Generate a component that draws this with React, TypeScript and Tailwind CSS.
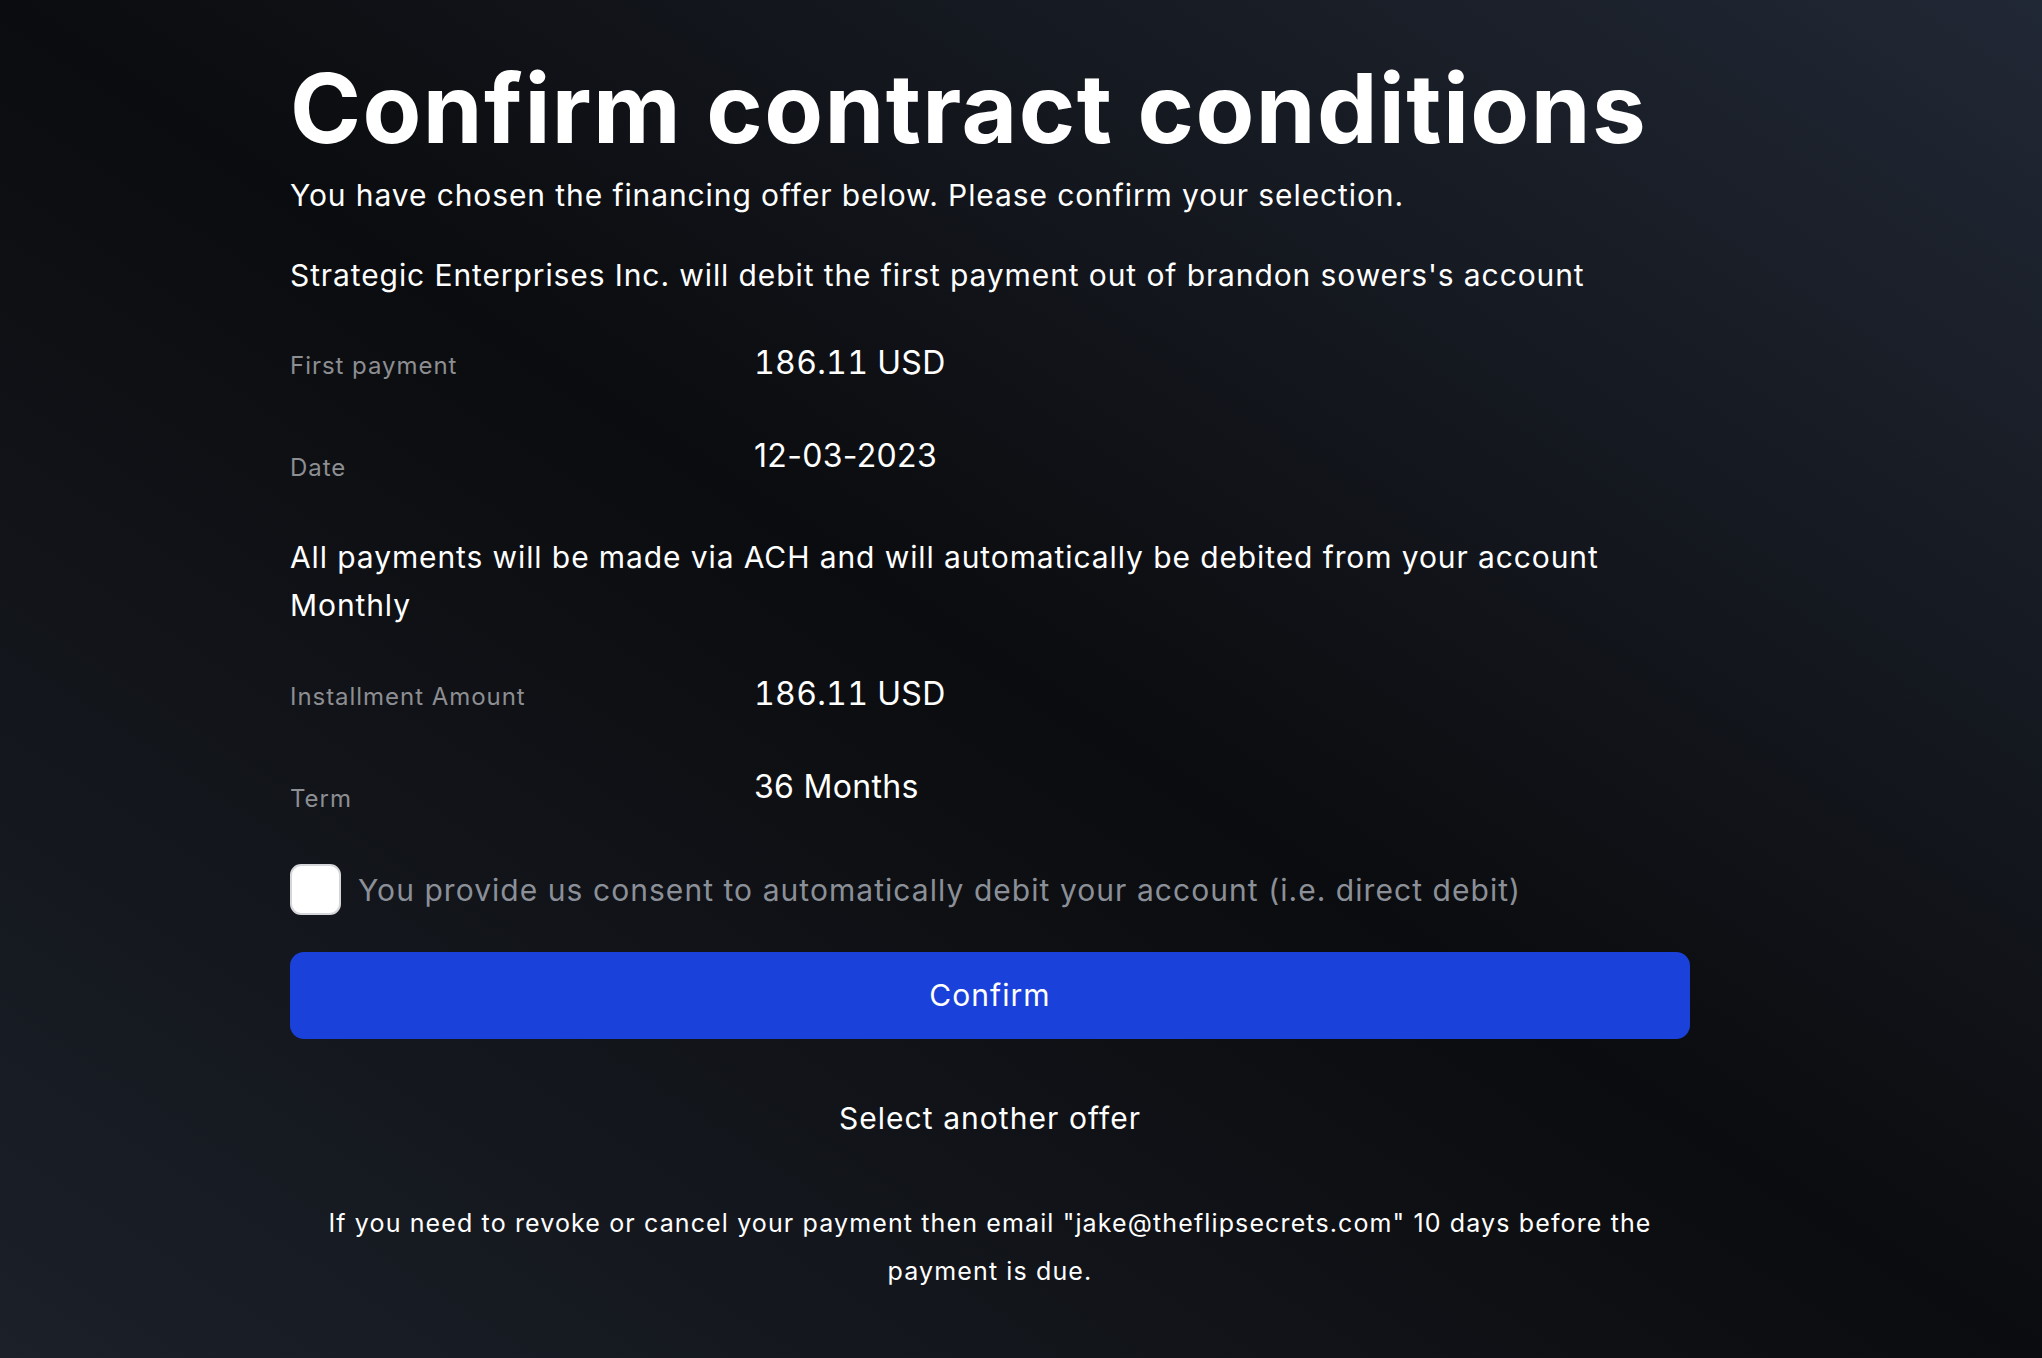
import { useState } from "react";

const rows = [
  { label: "First payment", value: "186.11 USD" },
  { label: "Date", value: "12-03-2023" },
];

const rows2 = [
  { label: "Installment Amount", value: "186.11 USD" },
  { label: "Term", value: "36 Months" },
];

function DetailRow({ label, value, second }: { label: string; value: string; second?: boolean }) {
  return (
    <div
      className={
        second
          ? "mt-[53px] grid grid-cols-[464px_1fr] items-end"
          : "grid grid-cols-[464px_1fr] items-baseline"
      }
    >
      <div className="text-[24px] leading-[32px] tracking-[0.04em] text-[#8c8e92]">{label}</div>
      <div
        className={
          second
            ? "pb-2 text-[32px] leading-[40px] tracking-[0.01em] text-white"
            : "text-[32px] leading-[40px] tracking-[0.01em] tabular-nums text-white"
        }
      >
        {value}
      </div>
    </div>
  );
}

export default function App() {
  const [agreed, setAgreed] = useState(false);

  return (
    <div className="min-h-[1358px] w-full bg-linear-to-tr from-[#1b2029] via-[#0b0c0f] to-[#212835] font-['Inter','Noto_Sans',sans-serif] text-white">
      <div className="ml-[290px] w-[1400px] pt-[60px] pb-[40px]">
        <h1 className="text-[96px] font-bold leading-[96px] tracking-[0.015em]">Confirm contract conditions</h1>
        <p className="mt-[19px] text-[30px] leading-[40px] tracking-[0.03em]">
          You have chosen the financing offer below. Please confirm your selection.
        </p>
        <p className="mt-[40px] text-[30px] leading-[40px] tracking-[0.03em]">
          Strategic Enterprises Inc. will debit the first payment out of brandon sowers's account
        </p>

        <div className="mt-[48px]">
          <DetailRow {...rows[0]} />
          <DetailRow {...rows[1]} second />
        </div>

        <p className="mt-[49px] text-[30px] leading-[48px] tracking-[0.03em]">
          All payments will be made via ACH and will automatically be debited from your account Monthly
        </p>

        <div className="mt-[45px]">
          <DetailRow {...rows2[0]} />
          <DetailRow {...rows2[1]} second />
        </div>

        <label className="mt-[49px] flex cursor-pointer items-center gap-[17px]">
          <input
            type="checkbox"
            checked={agreed}
            onChange={(e) => setAgreed(e.target.checked)}
            className="h-[51px] w-[51px] shrink-0 cursor-pointer appearance-none rounded-[11px] border-2 border-[#d4d6da] bg-white checked:bg-[#1b41db]"
          />
          <span className="text-[30px] leading-[40px] tracking-[0.035em] text-[#8b9098]">
            You provide us consent to automatically debit your account (i.e. direct debit)
          </span>
        </label>

        <button className="mt-[37px] flex h-[87px] w-full items-center justify-center rounded-[14px] bg-[#1b41db] text-[30px] tracking-[0.035em] text-white">
          Confirm
        </button>

        <div className="mt-[59px] text-center text-[30px] leading-[40px] tracking-[0.035em]">Select another offer</div>

        <p className="mx-auto mt-[61px] w-[1360px] text-center text-[25px] leading-[48px] tracking-[0.045em]">
          If you need to revoke or cancel your payment then email "jake@theflipsecrets.com" 10 days before the payment is due.
        </p>
      </div>
    </div>
  );
}
